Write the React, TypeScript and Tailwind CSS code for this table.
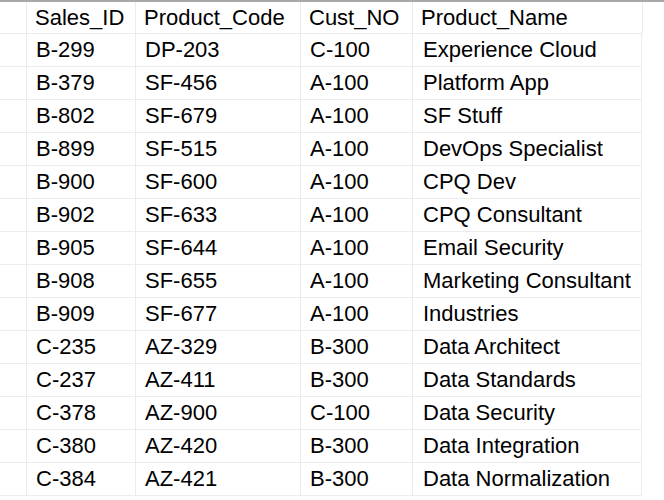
const columns = [
  { key: 'rowNum', label: '', width: 'w-[27px]' },
  { key: 'salesId', label: 'Sales_ID', width: 'w-[109px]' },
  { key: 'productCode', label: 'Product_Code', width: 'w-[165px]' },
  { key: 'custNo', label: 'Cust_NO', width: 'w-[112px]' },
  { key: 'productName', label: 'Product_Name', width: 'w-[230px]' },
];

const rows = [
  ['B-299', 'DP-203', 'C-100', 'Experience Cloud'],
  ['B-379', 'SF-456', 'A-100', 'Platform App'],
  ['B-802', 'SF-679', 'A-100', 'SF Stuff'],
  ['B-899', 'SF-515', 'A-100', 'DevOps Specialist'],
  ['B-900', 'SF-600', 'A-100', 'CPQ Dev'],
  ['B-902', 'SF-633', 'A-100', 'CPQ Consultant'],
  ['B-905', 'SF-644', 'A-100', 'Email Security'],
  ['B-908', 'SF-655', 'A-100', 'Marketing Consultant'],
  ['B-909', 'SF-677', 'A-100', 'Industries'],
  ['C-235', 'AZ-329', 'B-300', 'Data Architect'],
  ['C-237', 'AZ-411', 'B-300', 'Data Standards'],
  ['C-378', 'AZ-900', 'C-100', 'Data Security'],
  ['C-380', 'AZ-420', 'B-300', 'Data Integration'],
  ['C-384', 'AZ-421', 'B-300', 'Data Normalization'],
];

export default function App() {
  return (
    <div className="w-[664px] h-[500px] overflow-hidden bg-white text-black text-[22px] leading-none font-['Liberation_Sans',Arial,sans-serif]">
      {/* header */}
      <div className="flex h-[34px] border-t-2 border-[#a9a9a9]">
        {columns.map((c) => (
          <div
            key={c.key}
            className={`${c.width} flex items-center pl-[8px] border-r border-b border-[#ececec]`}
          >
            {c.label}
          </div>
        ))}
      </div>
      {rows.map((r, idx) => (
        <div key={idx} className="flex h-[33px]">
          <div className="w-[27px] border-r border-b border-[#ececec]" />
          <div className="w-[109px] flex items-center pl-[9px] border-r border-b border-[#ececec]">{r[0]}</div>
          <div className="w-[165px] flex items-center pl-[9px] border-r border-b border-[#ececec]">{r[1]}</div>
          <div className="w-[112px] flex items-center pl-[9px] border-r border-b border-[#ececec]">{r[2]}</div>
          <div className="w-[229px] flex items-center pl-[10px] border-r border-b border-[#ececec]">{r[3]}</div>
        </div>
      ))}
    </div>
  );
}
